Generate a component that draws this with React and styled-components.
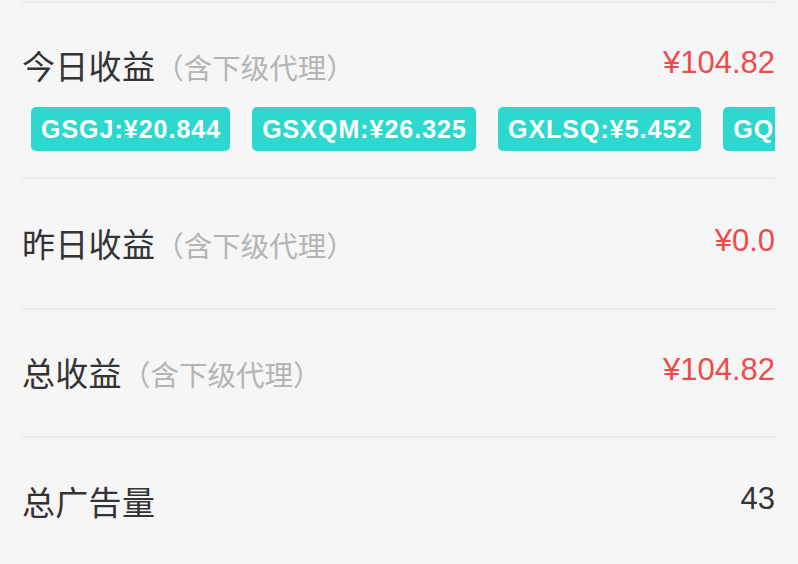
import React from 'react';
import styled, { createGlobalStyle } from 'styled-components';

const GlobalStyle = createGlobalStyle`
  html, body {
    margin: 0;
    padding: 0;
    background: #f6f6f6;
  }
  body {
    font-family: "Noto Sans CJK SC", "Noto Sans", sans-serif;
  }
`;

const Page = styled.div`
  width: 798px;
  height: 564px;
  overflow: hidden;
  background: #f6f6f6;
  padding-top: 1px;
  box-sizing: border-box;
`;

const List = styled.ul`
  list-style: none;
  margin: 0 23px 0 22px;
  padding: 0;
  border-top: 2px solid #ebebeb;
`;

const Row = styled.li`
  display: flex;
  flex-direction: column;
  justify-content: center;
  height: ${(p) => p.height}px;
  border-bottom: 2px solid #ebebeb;
  box-sizing: border-box;
  padding: ${(p) => (p.withTags ? '36px 0 26px' : '0 0 2px')};
`;

const Header = styled.div`
  display: flex;
  align-items: center;
  justify-content: space-between;
  height: 52px;
`;

const Label = styled.div`
  display: flex;
  align-items: baseline;
`;

const Title = styled.span`
  font-size: 33px;
  color: #333;
  letter-spacing: 0.3px;
`;

const Note = styled.span`
  font-size: 28.5px;
  color: #b4b4b4;
`;

const Value = styled.span`
  font-family: "Liberation Sans", Arial, sans-serif;
  font-size: 31px;
  color: ${(p) => (p.plain ? '#333' : '#f04a4a')};
  margin-top: -4px;
`;

const Tags = styled.div`
  display: flex;
  gap: 22px;
  padding-left: 9px;
  margin-top: 17px;
  overflow: hidden;
  white-space: nowrap;
`;

const Tag = styled.span`
  flex: none;
  height: 44px;
  line-height: 44px;
  padding: 0 9px 0 10px;
  border-radius: 5px;
  background: #2dd8cf;
  color: #fff;
  font-family: "Liberation Sans", Arial, sans-serif;
  font-weight: bold;
  font-size: 25px;
  letter-spacing: 1px;
`;

const tags = [
  'GSGJ:¥20.844',
  'GSXQM:¥26.325',
  'GXLSQ:¥5.452',
  'GQQG:¥12.101',
];

const rows = [
  { title: '昨日收益', note: '（含下级代理）', value: '¥0.0', height: 131 },
  { title: '总收益', note: '（含下级代理）', value: '¥104.82', height: 128 },
  { title: '总广告量', value: '43', plain: true, height: 130 },
];

export default function App() {
  return (
    <Page>
      <GlobalStyle />
      <List>
        <Row withTags height={176}>
          <Header>
            <Label>
              <Title>今日收益</Title>
              <Note>（含下级代理）</Note>
            </Label>
            <Value>¥104.82</Value>
          </Header>
          <Tags>
            {tags.map((t) => (
              <Tag key={t}>{t}</Tag>
            ))}
          </Tags>
        </Row>
        {rows.map((r) => (
          <Row key={r.title} height={r.height}>
            <Header>
              <Label>
                <Title>{r.title}</Title>
                {r.note && <Note>{r.note}</Note>}
              </Label>
              <Value plain={r.plain}>{r.value}</Value>
            </Header>
          </Row>
        ))}
      </List>
    </Page>
  );
}
